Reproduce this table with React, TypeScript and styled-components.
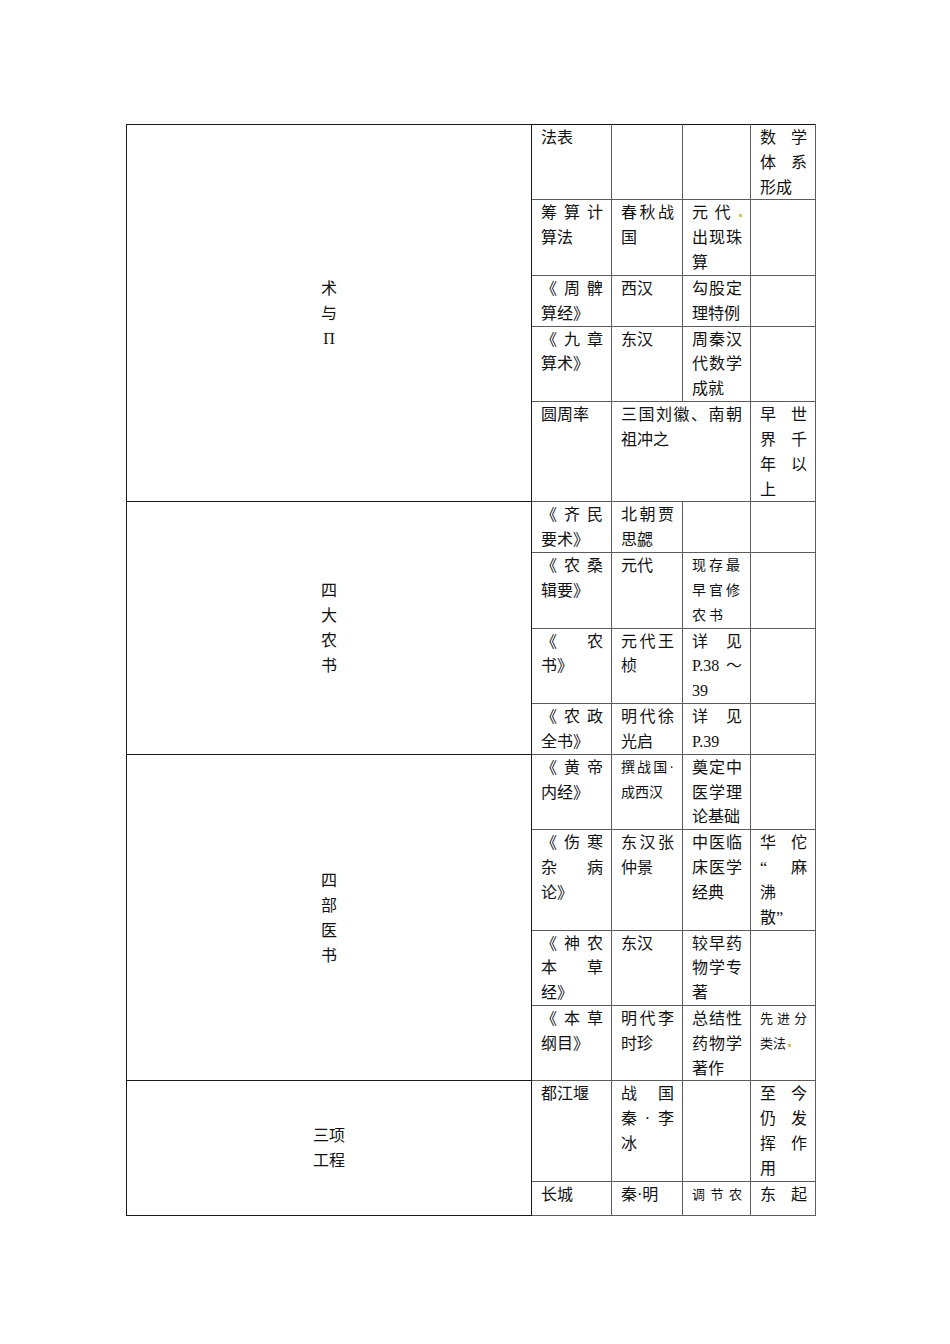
import React from "react";
import styled, { createGlobalStyle } from "styled-components";

// Page reset and base font
const GlobalStyle = createGlobalStyle`
  html, body {
    margin: 0;
    padding: 0;
    background: #ffffff;
  }
  body {
    font-family: "Liberation Serif", "Noto Sans CJK SC", serif;
    font-size: 16px;
    color: #111;
  }
`;

const Page = styled.div`
  padding: 124px 0 120px 126px;
`;

const Table = styled.table`
  border-collapse: collapse;
  table-layout: fixed;
  width: 690px;
`;

const Col = styled.col<{ $w: number }>`
  width: ${(p) => p.$w}px;
`;

const Row = styled.tr<{ $height?: number }>`
  height: ${(p) => (p.$height ? `${p.$height}px` : "auto")};
`;

// Merged cell on the left holding the group title
const Label = styled.td`
  border: 1px solid #1a1a1a;
  text-align: center;
  vertical-align: middle;
  padding: 0;
`;

const LabelLine = styled.div`
  height: 25px;
  line-height: 25px;
`;

const Cell = styled.td<{ $size?: number; $first?: boolean; $kai?: boolean }>`
  border: 1px solid #5c5c5c;
  border-top-color: ${(p) => (p.$first ? "#111" : "#5c5c5c")};
  vertical-align: top;
  padding: 0 8px 0 9px;
  font-size: ${(p) => p.$size ?? 16}px;
  letter-spacing: ${(p) => (p.$kai ? "3px" : "0")};
`;

const Line = styled.div<{ $spread?: boolean }>`
  height: 24.83px;
  line-height: 25px;
  white-space: nowrap;
  text-align: ${(p) => (p.$spread ? "justify" : "left")};
  text-align-last: ${(p) => (p.$spread ? "justify" : "auto")};
  text-justify: inter-character;
`;

// small yellowish mark left in the scanned text
const Dot = styled.span`
  display: inline-block;
  width: 3px;
  height: 3px;
  margin-left: 2px;
  background: #d6c35e;
  vertical-align: 1px;
`;

type CellSpec = {
  lines: React.ReactNode[];
  span?: number;
  size?: number;
  full?: boolean;
  kai?: boolean;
};

type RowSpec = { cells: (CellSpec | React.ReactNode[])[]; height?: number };
type Group = { label: string[]; rows: RowSpec[] };

const columns = [405, 80, 71, 68, 65];

const groups: Group[] = [
  {
    label: ["术", "与", "Π"],
    rows: [
      { cells: [["法表"], [], [], ["数学", "体系", "形成"]] },
      {
        cells: [
          ["筹算计", "算法"],
          ["春秋战", "国"],
          [<>元代<Dot /></>, "出现珠", "算"],
          [],
        ],
      },
      { cells: [["《周髀", "算经》"], ["西汉"], ["勾股定", "理特例"], []] },
      { cells: [["《九章", "算术》"], ["东汉"], ["周秦汉", "代数学", "成就"], []] },
      {
        cells: [
          ["圆周率"],
          { lines: ["三国刘徽、南朝", "祖冲之"], span: 2 },
          ["早世", "界千", "年以", "上"],
        ],
      },
    ],
  },
  {
    label: ["四", "大", "农", "书"],
    rows: [
      { cells: [["《齐民", "要术》"], ["北朝贾", "思勰"], [], []] },
      {
        cells: [
          ["《农桑", "辑要》"],
          ["元代"],
          { lines: ["现存最", "早官修", "农书"], size: 14, kai: true },
          [],
        ],
      },
      { cells: [["《农", "书》"], ["元代王", "桢"], ["详见", "P.38 ～", "39"], []] },
      { cells: [["《农政", "全书》"], ["明代徐", "光启"], ["详见", "P.39"], []] },
    ],
  },
  {
    label: ["四", "部", "医", "书"],
    rows: [
      {
        cells: [
          ["《黄帝", "内经》"],
          { lines: ["撰战国·", "成西汉"], size: 14 },
          ["奠定中", "医学理", "论基础"],
          [],
        ],
      },
      {
        cells: [
          ["《伤寒", "杂病", "论》"],
          ["东汉张", "仲景"],
          ["中医临", "床医学", "经典"],
          ["华佗", "“麻", "沸", "散”"],
        ],
      },
      { cells: [["《神农", "本草", "经》"], ["东汉"], ["较早药", "物学专", "著"], []] },
      {
        cells: [
          ["《本草", "纲目》"],
          ["明代李", "时珍"],
          ["总结性", "药物学", "著作"],
          { lines: ["先进分", <>类法<Dot /></>], size: 13 },
        ],
      },
    ],
  },
  {
    label: ["三项", "工程"],
    rows: [
      { cells: [["都江堰"], ["战国", "秦·李", "冰"], [], ["至今", "仍发", "挥作", "用"]] },
      {
        height: 34,
        cells: [
          ["长城"],
          ["秦·明"],
          { lines: ["调节农"], size: 13, full: true },
          { lines: ["东起"], full: true },
        ],
      },
    ],
  },
];

const toSpec = (c: CellSpec | React.ReactNode[]): CellSpec =>
  Array.isArray(c) ? { lines: c } : c;

const App: React.FC = () => {
  return (
    <Page>
      <GlobalStyle />
      <Table>
        <colgroup>
          {columns.map((w, i) => (
            <Col key={i} $w={w} />
          ))}
        </colgroup>
        <tbody>
          {groups.map((g, gi) =>
            g.rows.map((r, ri) => {
              const first = gi === 0 && ri === 0;
              return (
                <Row key={`${gi}-${ri}`} $height={r.height}>
                  {ri === 0 && (
                    <Label rowSpan={g.rows.length}>
                      {g.label.map((t, i) => (
                        <LabelLine key={i}>{t}</LabelLine>
                      ))}
                    </Label>
                  )}
                  {r.cells.map((raw, ci) => {
                    const c = toSpec(raw);
                    return (
                      <Cell
                        key={ci}
                        colSpan={c.span}
                        $size={c.size}
                        $first={first}
                        $kai={c.kai}
                      >
                        {c.lines.map((l, li) => (
                          <Line
                            key={li}
                            $spread={c.full || li < c.lines.length - 1}
                          >
                            {l}
                          </Line>
                        ))}
                      </Cell>
                    );
                  })}
                </Row>
              );
            })
          )}
        </tbody>
      </Table>
    </Page>
  );
};

export default App;
